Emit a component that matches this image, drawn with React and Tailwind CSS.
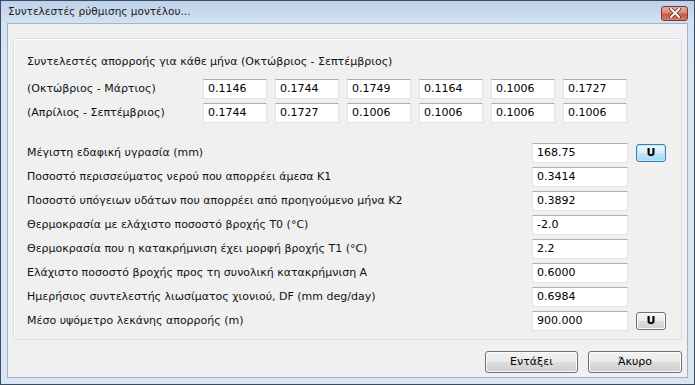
import React from "react";

const row1 = ["0.1146", "0.1744", "0.1749", "0.1164", "0.1006", "0.1727"];
const row2 = ["0.1744", "0.1727", "0.1006", "0.1006", "0.1006", "0.1006"];

const params = [
  { label: "Μέγιστη εδαφική υγρασία (mm)", value: "168.75", button: "default" },
  { label: "Ποσοστό περισσεύματος νερού που απορρέει άμεσα K1", value: "0.3414" },
  { label: "Ποσοστό υπόγειων υδάτων που απορρέει από προηγούμενο μήνα K2", value: "0.3892" },
  { label: "Θερμοκρασία με ελάχιστο ποσοστό βροχής T0 (°C)", value: "-2.0" },
  { label: "Θερμοκρασία που η κατακρήμνιση έχει μορφή βροχής T1 (°C)", value: "2.2" },
  { label: "Ελάχιστο ποσοστό βροχής προς τη συνολική κατακρήμνιση A", value: "0.6000" },
  { label: "Ημερήσιος συντελεστής λιωσίματος χιονιού, DF (mm deg/day)", value: "0.6984" },
  { label: "Μέσο υψόμετρο λεκάνης απορροής (m)", value: "900.000", button: "normal" },
];

function TextBox({ value, className }) {
  return (
    <div
      className={`h-[20px] bg-white border border-[#e2e3ea] border-t-[#abadb3] flex items-center pl-[4px] text-[11px] text-black ${className}`}
    >
      {value}
    </div>
  );
}

function WinButton({ children, className, isDefault }) {
  return (
    <div
      className={`flex items-center justify-center rounded-[3px] border text-[11px] text-black ${
        isDefault
          ? "border-[#3c7fb1] bg-[linear-gradient(#eaf6fd_0%,#d9f0fc_50%,#bee6fd_51%,#a7d9f5_100%)] shadow-[inset_0_0_0_1px_#c4e5f6]"
          : "border-[#707070] bg-[linear-gradient(#f2f2f2_0%,#ebebeb_50%,#dddddd_51%,#cfcfcf_100%)] shadow-[inset_0_0_0_1px_#fcfcfc]"
      } ${className}`}
    >
      {children}
    </div>
  );
}

export default function App() {
  return (
    <div
      className="w-[695px] h-[385px] flex flex-col border border-[#3b4b60] bg-[linear-gradient(#bed1e9_0px,#d3e1f2_22px,#d9e5f3_60px,#d9e5f3_100%)] px-[6px] pb-[6px] overflow-hidden"
      style={{ fontFamily: "'DejaVu Sans', Verdana, sans-serif" }}
    >
      <div className="h-[22px] flex items-center shrink-0">
        <span className="pl-[1px] text-[10.5px] text-[#1b1b1b]">Συντελεστές ρύθμισης μοντέλου...</span>
        <div className="ml-auto mt-[2px] w-[27px] h-[15px] rounded-[3px] border border-[#7a3a30] bg-[linear-gradient(#e9a99b_0%,#d88a77_45%,#c75a43_55%,#d47d62_100%)] flex items-center justify-center">
          <svg width="12" height="10" viewBox="0 0 12 10">
            <path d="M2 1 L10 9 M10 1 L2 9" stroke="#5a2a22" strokeWidth="3.4" strokeLinecap="square" />
            <path d="M2 1 L10 9 M10 1 L2 9" stroke="#ffffff" strokeWidth="2" strokeLinecap="square" />
          </svg>
        </div>
      </div>
      <div className="flex-1 bg-[#f0f0f0] border border-[#9fb3cb] flex flex-col">
        <div className="mt-[14px] mx-[5px] h-[302px] rounded-[3px] border border-[#d5dfe5] shadow-[inset_1px_1px_0_#ffffff] pl-[13px] pt-[11px] flex flex-col text-[11px] text-[#111]">
          <div className="h-[24px] flex items-center">
            Συντελεστές απορροής για κάθε μήνα (Οκτώβριος - Σεπτέμβριος)
          </div>
          <div className="mt-[3px] h-[24px] flex items-center">
            <div className="w-[176px]">(Οκτώβριος - Μάρτιος)</div>
            <div className="flex gap-[8px]">
              {row1.map((v, i) => (
                <TextBox key={i} value={v} className="w-[64px]" />
              ))}
            </div>
          </div>
          <div className="h-[24px] flex items-center">
            <div className="w-[176px]">(Απρίλιος - Σεπτέμβριος)</div>
            <div className="flex gap-[8px]">
              {row2.map((v, i) => (
                <TextBox key={i} value={v} className="w-[64px]" />
              ))}
            </div>
          </div>
          <div className="mt-[16px] flex flex-col">
            {params.map((p, i) => (
              <div key={i} className="h-[24px] flex items-center">
                <div className="w-[505px]">{p.label}</div>
                <TextBox value={p.value} className="w-[96px]" />
                {p.button && (
                  <WinButton
                    isDefault={p.button === "default"}
                    className="ml-[8px] w-[30px] h-[18px] font-bold"
                  >
                    U
                  </WinButton>
                )}
              </div>
            ))}
          </div>
        </div>
        <div className="mt-[11px] mr-[5px] flex justify-end gap-[10px]">
          <WinButton className="w-[93px] h-[22px]">Εντάξει</WinButton>
          <WinButton className="w-[94px] h-[22px]">Άκυρο</WinButton>
        </div>
      </div>
    </div>
  );
}
